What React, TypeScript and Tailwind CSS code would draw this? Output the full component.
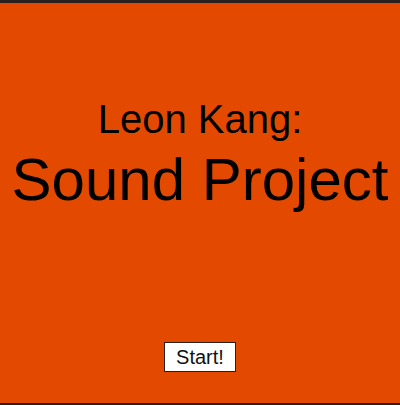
import React from 'react'

const App: React.FC = () => {
  return (
    <div
      className="w-[400px] h-[405px] bg-[#e34a00] border-t-[3px] border-b-2 border-[#2a2020] flex flex-col items-center text-black"
      style={{ fontFamily: '"Liberation Sans", Arial, sans-serif' }}
    >
      <div className="pt-[94px] text-[40px] leading-[45px]">Leon Kang:</div>
      <div className="mt-[4px] text-[60px] leading-[67px]">Sound Project</div>
      <button className="mt-[129px] px-[11px] h-[30px] text-[20px] leading-[24px] bg-white border border-[#2a2020] text-[#111]">
        Start!
      </button>
    </div>
  )
}

export default App
